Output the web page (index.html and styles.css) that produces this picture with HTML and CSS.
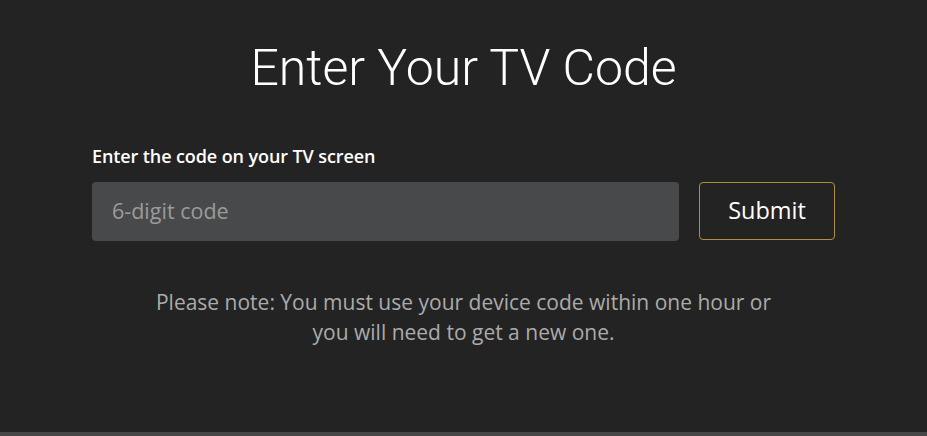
FILE: index.html
```html
<!DOCTYPE html>
<html>
<head>
<meta charset="utf-8">
<link rel="stylesheet" href="styles.css">
</head>
<body>
<main class="page">
  <h1 class="title">Enter Your TV Code</h1>
  <form class="code-form">
    <label class="label" for="code">Enter the code on your TV screen</label>
    <div class="row">
      <input id="code" class="input" type="text" placeholder="6-digit code">
      <button type="button" class="submit">Submit</button>
    </div>
  </form>
  <p class="note">Please note: You must use your device code within one hour or<br>you will need to get a new one.</p>
</main>
<div class="bottom-bar"></div>
</body>
</html>
```

FILE: styles.css
```css
html, body {
  margin: 0;
  padding: 0;
  height: 100%;
}
body {
  background: #232323;
  font-family: "Open Sans", "Liberation Sans", sans-serif;
  color: #fff;
  display: flex;
  flex-direction: column;
}
.page {
  flex: 1;
  width: 743px;
  margin: 0 auto;
  display: flex;
  flex-direction: column;
  align-items: center;
}
.title {
  margin: 38px 0 0;
  font-family: Roboto, "Liberation Sans", sans-serif;
  font-size: 50px;
  font-weight: 300;
  line-height: 60px;
  color: #fff;
}
.code-form {
  align-self: stretch;
  margin-top: 47px;
  display: flex;
  flex-direction: column;
}
.label {
  font-size: 18px;
  font-weight: 600;
  line-height: 23px;
  letter-spacing: -0.1px;
}
.row {
  margin-top: 14px;
  display: flex;
  gap: 20px;
}
.input {
  flex: 1;
  height: 59px;
  box-sizing: border-box;
  border: none;
  border-radius: 4px;
  background: #48494b;
  padding: 0 20px 3px;
  font-family: inherit;
  font-size: 21.5px;
  color: #fff;
  outline: none;
}
.input::placeholder {
  color: #9b9b9b;
}
.submit {
  width: 136px;
  height: 58px;
  box-sizing: border-box;
  background: transparent;
  border: 1px solid #b08f3c;
  border-radius: 4px;
  color: #fff;
  font-family: inherit;
  font-size: 23.5px;
  padding: 0 0 3px;
}
.note {
  margin: 46px 0 0;
  text-align: center;
  font-size: 21px;
  line-height: 30px;
  color: #ababab;
}
.bottom-bar {
  height: 4px;
  background: #474747;
}
```
